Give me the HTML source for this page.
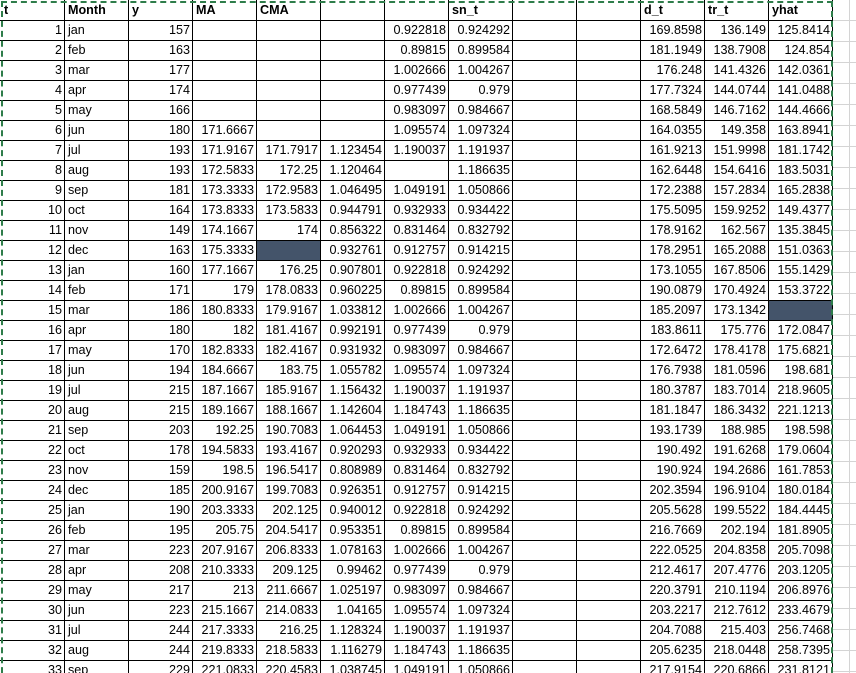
<!DOCTYPE html>
<html><head><meta charset="utf-8"><style>
html,body{margin:0;padding:0;background:#fff;width:856px;height:673px;overflow:hidden;position:relative}
.grid{position:absolute;left:832px;top:0;width:24px;height:673px;
background:repeating-linear-gradient(to bottom,transparent 0,transparent 20px,#d4d4d4 20px,#d4d4d4 21px);background-position:0 0}
.vg{position:absolute;left:849px;top:0;width:1px;height:673px;background:#d4d4d4}
table{position:absolute;left:0;top:0;border-collapse:collapse;table-layout:fixed;width:833px;
font-family:"Liberation Sans",sans-serif;font-size:12.6px;color:#000}
col{width:64px}
td{height:19px;border:1px solid #000;padding:0 2px 0 1px;text-align:right;white-space:nowrap;overflow:hidden;line-height:19px;vertical-align:bottom}
td:nth-child(2){text-align:left;padding-left:3px}
tr:first-child td{text-align:left;font-weight:bold;padding-left:3px;border-top:1px solid #fff}
td:first-child{border-left:1px solid #fff}
.d{background:#44546a}
.dash{position:absolute;left:1px;top:1px;width:828px;height:700px;border:2px dashed #2e7d4a;border-bottom:none}
</style></head><body>
<div class="grid"></div><div class="vg"></div>
<table>
<colgroup><col><col><col><col><col><col><col><col><col><col><col><col><col></colgroup>
<tr><td>t</td><td>Month</td><td>y</td><td>MA</td><td>CMA</td><td></td><td></td><td>sn_t</td><td></td><td></td><td>d_t</td><td>tr_t</td><td>yhat</td></tr>
<tr><td>1</td><td>jan</td><td>157</td><td></td><td></td><td></td><td>0.922818</td><td>0.924292</td><td></td><td></td><td>169.8598</td><td>136.149</td><td>125.8414</td></tr>
<tr><td>2</td><td>feb</td><td>163</td><td></td><td></td><td></td><td>0.89815</td><td>0.899584</td><td></td><td></td><td>181.1949</td><td>138.7908</td><td>124.854</td></tr>
<tr><td>3</td><td>mar</td><td>177</td><td></td><td></td><td></td><td>1.002666</td><td>1.004267</td><td></td><td></td><td>176.248</td><td>141.4326</td><td>142.0361</td></tr>
<tr><td>4</td><td>apr</td><td>174</td><td></td><td></td><td></td><td>0.977439</td><td>0.979</td><td></td><td></td><td>177.7324</td><td>144.0744</td><td>141.0488</td></tr>
<tr><td>5</td><td>may</td><td>166</td><td></td><td></td><td></td><td>0.983097</td><td>0.984667</td><td></td><td></td><td>168.5849</td><td>146.7162</td><td>144.4666</td></tr>
<tr><td>6</td><td>jun</td><td>180</td><td>171.6667</td><td></td><td></td><td>1.095574</td><td>1.097324</td><td></td><td></td><td>164.0355</td><td>149.358</td><td>163.8941</td></tr>
<tr><td>7</td><td>jul</td><td>193</td><td>171.9167</td><td>171.7917</td><td>1.123454</td><td>1.190037</td><td>1.191937</td><td></td><td></td><td>161.9213</td><td>151.9998</td><td>181.1742</td></tr>
<tr><td>8</td><td>aug</td><td>193</td><td>172.5833</td><td>172.25</td><td>1.120464</td><td></td><td>1.186635</td><td></td><td></td><td>162.6448</td><td>154.6416</td><td>183.5031</td></tr>
<tr><td>9</td><td>sep</td><td>181</td><td>173.3333</td><td>172.9583</td><td>1.046495</td><td>1.049191</td><td>1.050866</td><td></td><td></td><td>172.2388</td><td>157.2834</td><td>165.2838</td></tr>
<tr><td>10</td><td>oct</td><td>164</td><td>173.8333</td><td>173.5833</td><td>0.944791</td><td>0.932933</td><td>0.934422</td><td></td><td></td><td>175.5095</td><td>159.9252</td><td>149.4377</td></tr>
<tr><td>11</td><td>nov</td><td>149</td><td>174.1667</td><td>174</td><td>0.856322</td><td>0.831464</td><td>0.832792</td><td></td><td></td><td>178.9162</td><td>162.567</td><td>135.3845</td></tr>
<tr><td>12</td><td>dec</td><td>163</td><td>175.3333</td><td class="d"></td><td>0.932761</td><td>0.912757</td><td>0.914215</td><td></td><td></td><td>178.2951</td><td>165.2088</td><td>151.0363</td></tr>
<tr><td>13</td><td>jan</td><td>160</td><td>177.1667</td><td>176.25</td><td>0.907801</td><td>0.922818</td><td>0.924292</td><td></td><td></td><td>173.1055</td><td>167.8506</td><td>155.1429</td></tr>
<tr><td>14</td><td>feb</td><td>171</td><td>179</td><td>178.0833</td><td>0.960225</td><td>0.89815</td><td>0.899584</td><td></td><td></td><td>190.0879</td><td>170.4924</td><td>153.3722</td></tr>
<tr><td>15</td><td>mar</td><td>186</td><td>180.8333</td><td>179.9167</td><td>1.033812</td><td>1.002666</td><td>1.004267</td><td></td><td></td><td>185.2097</td><td>173.1342</td><td class="d"></td></tr>
<tr><td>16</td><td>apr</td><td>180</td><td>182</td><td>181.4167</td><td>0.992191</td><td>0.977439</td><td>0.979</td><td></td><td></td><td>183.8611</td><td>175.776</td><td>172.0847</td></tr>
<tr><td>17</td><td>may</td><td>170</td><td>182.8333</td><td>182.4167</td><td>0.931932</td><td>0.983097</td><td>0.984667</td><td></td><td></td><td>172.6472</td><td>178.4178</td><td>175.6821</td></tr>
<tr><td>18</td><td>jun</td><td>194</td><td>184.6667</td><td>183.75</td><td>1.055782</td><td>1.095574</td><td>1.097324</td><td></td><td></td><td>176.7938</td><td>181.0596</td><td>198.681</td></tr>
<tr><td>19</td><td>jul</td><td>215</td><td>187.1667</td><td>185.9167</td><td>1.156432</td><td>1.190037</td><td>1.191937</td><td></td><td></td><td>180.3787</td><td>183.7014</td><td>218.9605</td></tr>
<tr><td>20</td><td>aug</td><td>215</td><td>189.1667</td><td>188.1667</td><td>1.142604</td><td>1.184743</td><td>1.186635</td><td></td><td></td><td>181.1847</td><td>186.3432</td><td>221.1213</td></tr>
<tr><td>21</td><td>sep</td><td>203</td><td>192.25</td><td>190.7083</td><td>1.064453</td><td>1.049191</td><td>1.050866</td><td></td><td></td><td>193.1739</td><td>188.985</td><td>198.598</td></tr>
<tr><td>22</td><td>oct</td><td>178</td><td>194.5833</td><td>193.4167</td><td>0.920293</td><td>0.932933</td><td>0.934422</td><td></td><td></td><td>190.492</td><td>191.6268</td><td>179.0604</td></tr>
<tr><td>23</td><td>nov</td><td>159</td><td>198.5</td><td>196.5417</td><td>0.808989</td><td>0.831464</td><td>0.832792</td><td></td><td></td><td>190.924</td><td>194.2686</td><td>161.7853</td></tr>
<tr><td>24</td><td>dec</td><td>185</td><td>200.9167</td><td>199.7083</td><td>0.926351</td><td>0.912757</td><td>0.914215</td><td></td><td></td><td>202.3594</td><td>196.9104</td><td>180.0184</td></tr>
<tr><td>25</td><td>jan</td><td>190</td><td>203.3333</td><td>202.125</td><td>0.940012</td><td>0.922818</td><td>0.924292</td><td></td><td></td><td>205.5628</td><td>199.5522</td><td>184.4445</td></tr>
<tr><td>26</td><td>feb</td><td>195</td><td>205.75</td><td>204.5417</td><td>0.953351</td><td>0.89815</td><td>0.899584</td><td></td><td></td><td>216.7669</td><td>202.194</td><td>181.8905</td></tr>
<tr><td>27</td><td>mar</td><td>223</td><td>207.9167</td><td>206.8333</td><td>1.078163</td><td>1.002666</td><td>1.004267</td><td></td><td></td><td>222.0525</td><td>204.8358</td><td>205.7098</td></tr>
<tr><td>28</td><td>apr</td><td>208</td><td>210.3333</td><td>209.125</td><td>0.99462</td><td>0.977439</td><td>0.979</td><td></td><td></td><td>212.4617</td><td>207.4776</td><td>203.1205</td></tr>
<tr><td>29</td><td>may</td><td>217</td><td>213</td><td>211.6667</td><td>1.025197</td><td>0.983097</td><td>0.984667</td><td></td><td></td><td>220.3791</td><td>210.1194</td><td>206.8976</td></tr>
<tr><td>30</td><td>jun</td><td>223</td><td>215.1667</td><td>214.0833</td><td>1.04165</td><td>1.095574</td><td>1.097324</td><td></td><td></td><td>203.2217</td><td>212.7612</td><td>233.4679</td></tr>
<tr><td>31</td><td>jul</td><td>244</td><td>217.3333</td><td>216.25</td><td>1.128324</td><td>1.190037</td><td>1.191937</td><td></td><td></td><td>204.7088</td><td>215.403</td><td>256.7468</td></tr>
<tr><td>32</td><td>aug</td><td>244</td><td>219.8333</td><td>218.5833</td><td>1.116279</td><td>1.184743</td><td>1.186635</td><td></td><td></td><td>205.6235</td><td>218.0448</td><td>258.7395</td></tr>
<tr><td>33</td><td>sep</td><td>229</td><td>221.0833</td><td>220.4583</td><td>1.038745</td><td>1.049191</td><td>1.050866</td><td></td><td></td><td>217.9154</td><td>220.6866</td><td>231.8121</td></tr>
</table>
<div class="dash"></div>
</body></html>
